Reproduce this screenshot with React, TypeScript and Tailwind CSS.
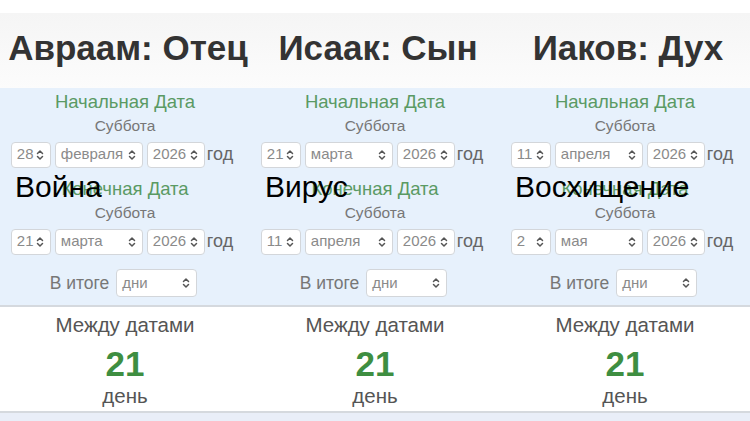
import { ChevronsUpDown } from "lucide-react";

type Panel = {
  title: string;
  overlay: string;
  start: [string, string];
  end: [string, string];
};

const panels: Panel[] = [
  { title: "Авраам: Отец", overlay: "Война", start: ["28", "февраля"], end: ["21", "марта"] },
  { title: "Исаак: Сын", overlay: "Вирус", start: ["21", "марта"], end: ["11", "апреля"] },
  { title: "Иаков: Дух", overlay: "Восхищение", start: ["11", "апреля"], end: ["2", "мая"] },
];

function FakeSelect({ value, width, height = "h-[26px]" }: { value: string; width: string; height?: string }) {
  return (
    <div
      className={`${width} ${height} flex items-center justify-between rounded-[4px] border border-[#d3d6da] bg-white pl-[5px] pr-[4px] text-[15px] text-[#8a8a8a]`}
    >
      <span>{value}</span>
      <ChevronsUpDown size={12} strokeWidth={3} className="text-[#555]" />
    </div>
  );
}

function DateRow({ day, month }: { day: string; month: string }) {
  return (
    <div className="mr-[6px] flex items-center justify-center gap-[4px]">
      <FakeSelect value={day} width="w-[40px]" />
      <FakeSelect value={month} width="w-[88px]" />
      <FakeSelect value="2026" width="w-[58px]" />
      <span className="-ml-[2px] text-[18px] text-[#666]">год</span>
    </div>
  );
}

function Column({ panel }: { panel: Panel }) {
  return (
    <div className="flex flex-col">
      <div className="h-[13px] bg-white" />
      <div className="flex h-[75px] items-center justify-center bg-gradient-to-b from-[#f5f5f5] to-[#fcfcfc] pb-[6px] pl-[6px]">
        <h1 className="text-[35px] font-bold leading-none text-[#333]">{panel.title}</h1>
      </div>

      <div className="relative flex h-[217px] flex-col items-center bg-[#e7f1fc] pt-[4px]">
        <div className="h-[20px] text-[18.5px] leading-[20px] text-[#5a9a64]">Начальная Дата</div>
        <div className="mt-[4px] h-[20px] text-[15.5px] leading-[20px] text-[#777]">Суббота</div>
        <div className="mt-[5px]">
          <DateRow day={panel.start[0]} month={panel.start[1]} />
        </div>
        <div className="mt-[11px] h-[20px] text-[18.5px] leading-[20px] text-[#5a9a64]">Конечная Дата</div>
        <div className="mt-[4px] h-[20px] text-[15.5px] leading-[20px] text-[#777]">Суббота</div>
        <div className="mt-[5px]">
          <DateRow day={panel.end[0]} month={panel.end[1]} />
        </div>
        <div className="mt-[14px] mr-[3px] flex items-center gap-[7px]">
          <span className="text-[17.5px] text-[#777]">В итоге</span>
          <FakeSelect value="дни" width="w-[81px]" height="h-[28px]" />
        </div>

        <div className="absolute left-[15px] top-[79px] text-[30px] leading-[40px] text-black">{panel.overlay}</div>
      </div>

      <div className="flex h-[108px] flex-col items-center border-y-2 border-[#d5d9de] bg-white pt-[6px]">
        <div className="text-[20.5px] leading-[24px] text-[#555]">Между датами</div>
        <div className="mt-[7px] text-[35px] font-bold leading-[40px] text-[#3e8e41]">21</div>
        <div className="mt-[0px] text-[20.5px] leading-[24px] text-[#555]">день</div>
      </div>
      <div className="h-[8px] bg-[#e9eef8]" />
    </div>
  );
}

export default function App() {
  return (
    <div className="grid h-[421px] w-[750px] grid-cols-3 overflow-hidden bg-white font-['Liberation_Sans',Arial,sans-serif]">
      {panels.map((p) => (
        <Column key={p.title} panel={p} />
      ))}
    </div>
  );
}
